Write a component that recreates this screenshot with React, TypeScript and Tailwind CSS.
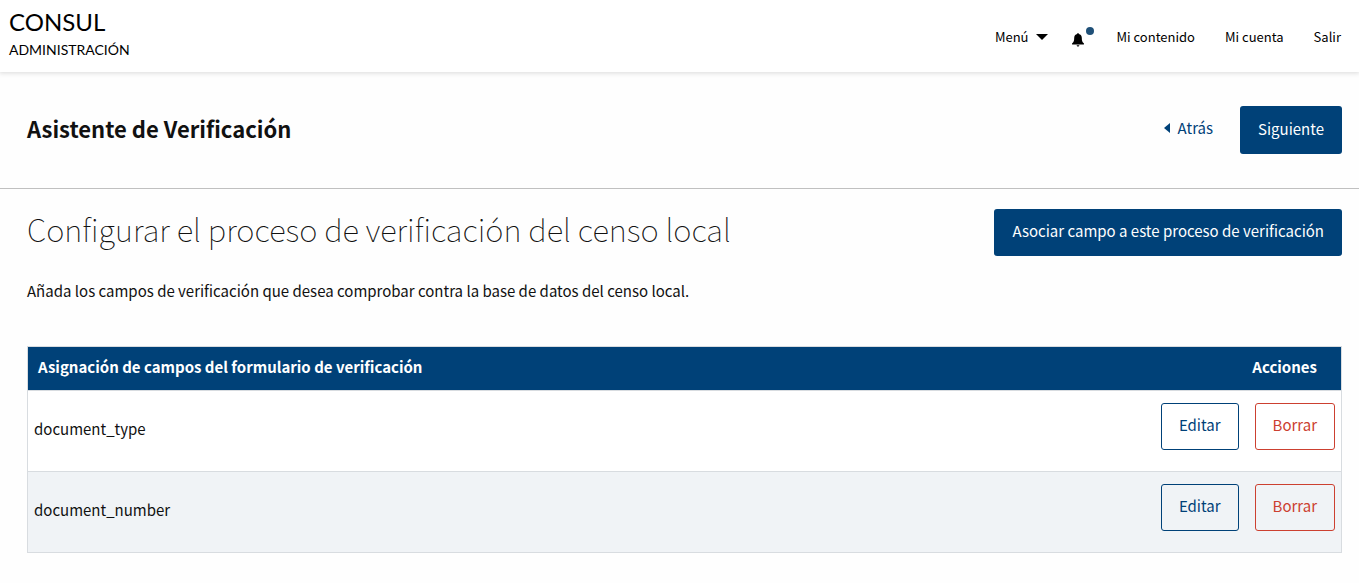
const fields = ['document_type', 'document_number'];

const solidButton =
  'cursor-pointer rounded-[3px] bg-[#004178] px-[18px] text-[15px] leading-6 text-[#fefefe]';
const hollowButton =
  'cursor-pointer rounded-[3px] border px-[17px] pt-[9px] pb-[12px] text-[15px] leading-6';

function Header() {
  return (
    <header className="flex h-[72px] items-center justify-between bg-white pr-[18px] pl-[9px] text-black shadow-[0_0_5px_1px_rgba(0,0,0,0.15)]">
      <a href="#inicio" className="flex flex-col pb-1 font-['Lato',sans-serif]">
        <span className="text-[24px] leading-8">CONSUL</span>
        <span className="text-[14px] leading-6">ADMINISTRACIÓN</span>
      </a>
      <nav aria-label="Principal" className="flex items-center gap-[30px] pt-0.5 text-[13px] leading-5">
        <div className="flex items-center gap-6">
          <button type="button" className="flex cursor-pointer items-center gap-2">
            Menú
            <svg viewBox="0 0 12 6" className="h-1.5 w-3 fill-current" aria-hidden="true">
              <path d="M0 0h12L6 6z" />
            </svg>
          </button>
          <a href="#notificaciones" aria-label="Notificaciones" className="relative block w-[14px]">
            <svg viewBox="0 0 12 14" className="mt-1.5 h-[14px] w-3 fill-current" aria-hidden="true">
              <path d="M6 0c.5 0 .8.4.8.9 1.9.4 3 1.900 3 3.900 0 3 .5 4.600 2.100 5.500v1.200H.1v-1.200C1.700 9.400 2.200 7.800 2.200 4.800c0-2 1.100-3.500 3-3.900 0-.5.3-.9.8-.9zM4.600 12.200h2.800c-.2.900-.7 1.400-1.400 1.400s-1.200-.5-1.400-1.400z" />
            </svg>
            <span className="absolute top-0 left-[14px] size-2 rounded-full bg-[#1f5078]" />
          </a>
        </div>
        <a href="#contenido">Mi contenido</a>
        <a href="#cuenta">Mi cuenta</a>
        <a href="#salir">Salir</a>
      </nav>
    </header>
  );
}

function WizardBar() {
  return (
    <section className="flex items-center justify-between border-b border-[#c0c0c0] py-[34px] pr-[17px] pl-[27px]">
      <h2 className="pb-1 text-[22px] leading-8 font-bold">Asistente de Verificación</h2>
      <div className="flex items-center gap-[27px]">
        <a href="#atras" className="flex items-center gap-2 pb-1 text-[15px] leading-6 text-[#004178]">
          <svg viewBox="0 0 6 10" className="h-2.5 w-1.5 fill-current" aria-hidden="true">
            <path d="M6 0v10L0 5z" />
          </svg>
          Atrás
        </a>
        <button type="button" className={`${solidButton} pt-[11px] pb-[13px]`}>
          Siguiente
        </button>
      </div>
    </section>
  );
}

function FieldsTable() {
  return (
    <table className="mt-[43px] w-full border-collapse border border-[#d8dce0] text-[15px] leading-6">
      <thead>
        <tr className="border-b border-[#d8dce0] bg-[#004178] text-white">
          <th scope="col" className="px-2.5 pt-2 pb-[11px] text-left font-bold">
            Asignación de campos del formulario de verificación
          </th>
          <th scope="col" className="pt-2 pr-6 pb-[11px] text-right font-bold">
            Acciones
          </th>
        </tr>
      </thead>
      <tbody>
        {fields.map((field) => (
          <tr key={field} className="border-b border-[#d8dce0] bg-white even:bg-[#f0f3f6]">
            <td className="px-1.5 pb-1">{field}</td>
            <td className="pt-3 pr-1.5 pb-[21px]">
              <div className="flex justify-end gap-4">
                <button type="button" className={`${hollowButton} border-[#004178] text-[#004178]`}>
                  Editar
                </button>
                <button type="button" className={`${hollowButton} border-[#cc4030] text-[#cc4030]`}>
                  Borrar
                </button>
              </div>
            </td>
          </tr>
        ))}
      </tbody>
    </table>
  );
}

export default function App() {
  return (
    <div className="min-h-screen bg-[#fefefe] font-['Noto_Sans_CJK_SC',sans-serif] text-[#111111]">
      <Header />
      <WizardBar />
      <main className="pt-5 pr-[17px] pb-[30px] pl-[27px]">
        <div className="flex items-start justify-between gap-6">
          <h1 className="text-[31px] leading-10 font-thin">
            Configurar el proceso de verificación del censo local
          </h1>
          <button type="button" className={`${solidButton} pt-2.5 pb-[13px]`}>
            Asociar campo a este proceso de verificación
          </button>
        </div>
        <p className="mt-[23px] text-[15px] leading-6">
          Añada los campos de verificación que desea comprobar contra la base de datos del censo local.
        </p>
        <FieldsTable />
      </main>
    </div>
  );
}
